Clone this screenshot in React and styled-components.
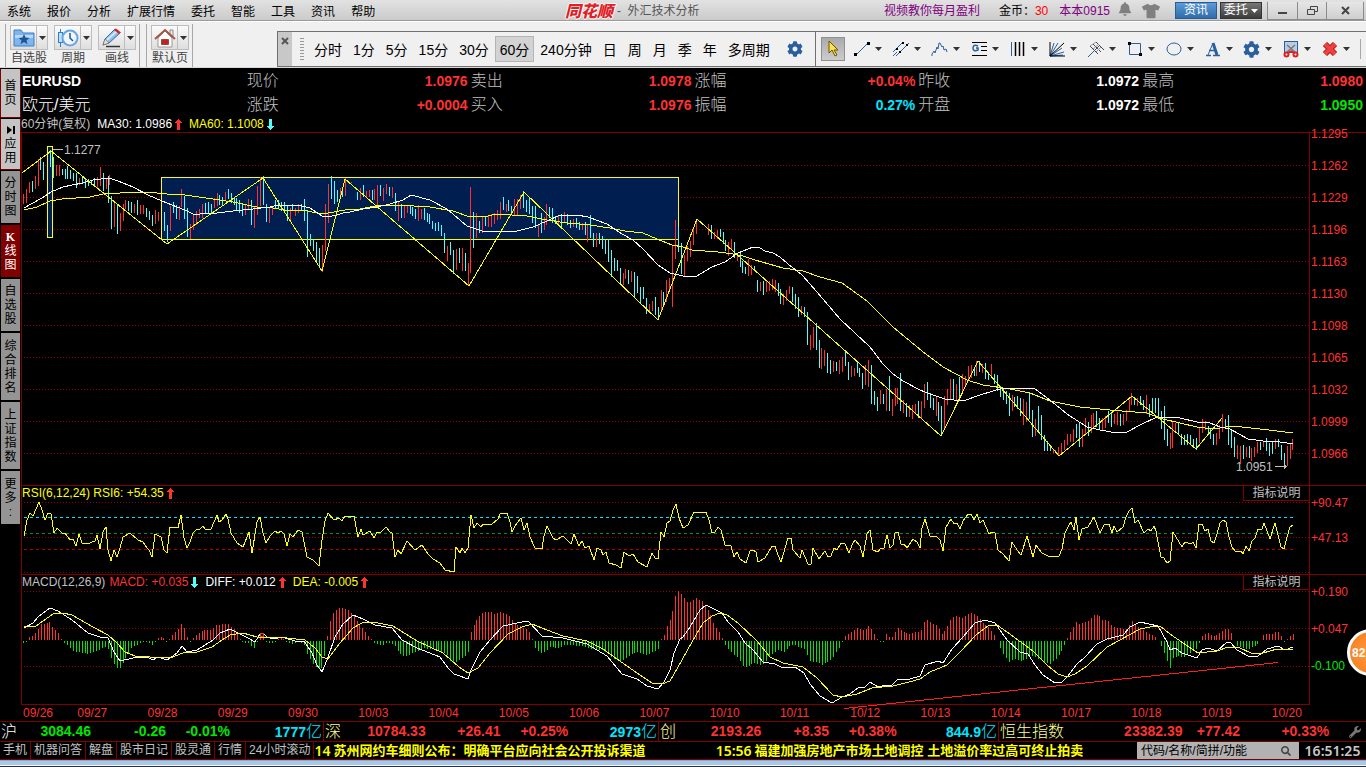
import React from 'react';
import styled, { createGlobalStyle, css } from 'styled-components';
import { FaWrench, FaSearch, FaTshirt, FaBell, FaCog } from 'react-icons/fa';

const GlobalStyle = createGlobalStyle`
  * { box-sizing: border-box; }
  body {
    margin: 0;
    background: #000;
    overflow: hidden;
    font-family: 'Liberation Sans', 'Noto Sans CJK SC', sans-serif;
    font-size: 12px;
  }
  button, input {
    font-family: inherit;
    font-size: inherit;
    margin: 0;
    padding: 0;
    border: 0;
    background: none;
    color: inherit;
  }
  button { white-space: nowrap; }
  a { color: inherit; text-decoration: none; }
`;

const colors = {
  line: '#800000',
  red: '#ff3232',
  green: '#00e600',
  cyan: '#00e6ff',
  candle: '#54fcfc',
  yellow: '#ffff00',
  gray: '#c0c0c0',
  white: '#ffffff',
  cream: '#ffff96',
};

/* ---------- page ---------- */

const Page = styled.div`
  display: flex;
  flex-direction: column;
  min-height: 100vh;
  overflow: hidden;
  position: relative;
`;

/* ---------- title bar ---------- */

const TitleBar = styled.header`
  display: grid;
  grid-template-columns: 565fr 319fr 482fr;
  height: 21px;
  background: linear-gradient(#e2e2e2, #cbcbcb);
  border-bottom: 1px solid #9a9a9a;
  align-items: center;
  line-height: 20px;
  color: #000;
  white-space: nowrap;
`;

const Menu = styled.nav`
  display: flex;
  gap: 16px;
  padding-left: 7px;
`;

const AppTitle = styled.div`
  display: flex;
  align-items: center;
  gap: 4px;
  padding-top: 1px;
  line-height: 19px;
  color: #555;
`;

const Logo = styled.span`
  font-size: 16px;
  font-weight: 900;
  font-style: italic;
  color: #e01f26;
  text-shadow: 1px 0 #fff, -1px 0 #fff, 0 1px #fff, 0 -1px #fff;
`;

const TitleRight = styled.div`
  display: flex;
  align-items: center;
  justify-content: flex-end;
  padding-right: 2px;
`;

const Purple = styled.a`
  padding-top: 1px;
  color: #800080;
`;

const Coins = styled.span`
  margin: 0 11px 0 19px;
  b {
    font-weight: 400;
    color: #f00;
  }
`;

const TitleIcons = styled.span`
  display: flex;
  gap: 10px;
  margin: 0 15px 0 8px;
  color: #808080;
`;

const TitleButtons = styled.div`
  display: flex;
  gap: 3px;
  margin-right: 5px;
`;

const TitleButton = styled.button`
  width: 42px;
  height: 17px;
  line-height: 15px;
  color: #fff;
  border: 1px solid ${({ $dark }) => ($dark ? '#333' : '#2a5d94')};
  background: ${({ $dark }) => ($dark ? 'linear-gradient(#777, #3c3c3c)' : 'linear-gradient(#5d9ad6, #2f6cab)')};
  svg { vertical-align: middle; }
`;

const WindowButtons = styled.div`
  display: flex;
  height: 18px;
  border: 1px solid #8c8c8c;
  border-top: 0;
  background: linear-gradient(#e6e6e6, #cfcfcf);
`;

const WindowButton = styled.button`
  width: ${({ $w }) => $w}px;
  display: flex;
  align-items: center;
  justify-content: center;
  & + & { border-left: 1px solid #8c8c8c; }
`;

/* ---------- tool bar ---------- */

const ToolBar = styled.div`
  display: flex;
  height: 47px;
  background: #f0f0f0;
  border-top: 1px solid #fff;
  border-bottom: 1px solid #d8d8d8;
`;

const ToolGroup = styled.div`
  display: flex;
  gap: 6px;
  margin-top: 2px;
  padding: 1px 3px 0 4px;
  border-left: 1px solid #a8a8a8;
  border-right: 1px solid #a8a8a8;
  margin-left: ${({ $left }) => $left}px;
`;

const BigTool = styled.div`
  display: flex;
  flex-direction: column;
  align-items: center;
  width: 38px;
  color: #444;
  line-height: 17px;
  white-space: nowrap;
`;

const SplitButton = styled.div`
  display: flex;
  width: 38px;
  height: 26px;
  border: 1px solid #bdbdbd;
  background: linear-gradient(#fbfbfb, #dedede);
  button {
    display: flex;
    align-items: center;
    justify-content: center;
  }
  button:first-child { flex: 1; }
  button:last-child {
    width: 11px;
    border-left: 1px solid #bdbdbd;
  }
`;

const FloatBar = styled.div`
  display: flex;
  flex: 1;
  margin: 9px 0 0 84px;
  height: 36px;
  border: 1px solid #707070;
  border-right: 0;
  background: #f0f0f0;
  align-items: center;
`;

const FloatClose = styled.button`
  width: 14px;
  align-self: stretch;
  background: #c8c8c8;
  color: #555;
  display: flex;
  justify-content: center;
  padding-top: 5px;
`;

const Grip = styled.span`
  width: 4px;
  height: 25px;
  margin: 0 5px 0 8px;
  background: radial-gradient(circle, #999 1px, transparent 1px) 0 0 / 2px 3px;
`;

const Frames = styled.div`
  display: flex;
  gap: 1px;
  flex: 1;
  align-items: center;
`;

const Frame = styled.button`
  height: 26px;
  padding: 0 5px;
  font-size: 14px;
  color: #000;
  ${({ $on }) => $on && css`
    background: #d3d3d3;
    box-shadow: inset 0 0 0 1px #b4b4b4;
  `}
`;

const GearButton = styled.button`
  margin-left: 11px;
  color: #2a5f9e;
  display: flex;
`;

const DrawTools = styled.div`
  display: flex;
  align-items: center;
  align-self: stretch;
  padding-left: 5px;
  border-left: 1px solid #707070;
`;

const PointerButton = styled.button`
  width: 24px;
  height: 24px;
  margin-right: 5px;
  background: linear-gradient(#aaa, #ccc);
  border: 1px solid #909090;
`;

const DrawTool = styled.button`
  width: 39px;
  height: 26px;
  display: flex;
  align-items: center;
  justify-content: space-between;
  padding: 0 7px 0 3px;
`;

const BarEnd = styled.span`
  width: 6px;
  height: 20px;
  margin-left: 3px;
  border-left: 1px solid #a8a8a8;
`;

/* ---------- body ---------- */

const Body = styled.div`
  display: flex;
  flex: 1;
`;

const SideBar = styled.nav`
  width: 21px;
  display: flex;
  flex-direction: column;
  gap: 2px;
  padding: 1px 1px 0;
`;

const SideTab = styled.button`
  display: flex;
  flex-direction: column;
  align-items: center;
  justify-content: center;
  line-height: 14px;
  height: ${({ $h }) => $h}px;
  color: ${({ $on }) => ($on ? '#fff' : '#000')};
  background: ${({ $on, $light }) => ($on ? '#800000' : $light ? '#c4c4c4' : '#949494')};
  ${({ $light }) => $light && css`box-shadow: 1px 0 #800000, -1px 0 #800000, 0 1px #800000;`}
  ${({ $on }) => $on && css`
    span:first-child {
      font-family: 'Liberation Serif', serif;
      font-weight: 700;
    }
  `}
`;

const Main = styled.main`
  flex: 1;
  min-width: 0;
  display: flex;
  flex-direction: column;
`;

const Quotes = styled.div`
  display: grid;
  grid-template-columns: 225fr repeat(5, 224fr);
  grid-auto-rows: 24px;
  padding: 1px 0 0 1px;
  line-height: 24px;
  height: 49px;
`;

const QuoteName = styled.div`
  color: #fff;
  font-size: ${({ $bold }) => ($bold ? 14 : 16)}px;
  font-weight: ${({ $bold }) => ($bold ? 700 : 300)};
`;

const Quote = styled.div`
  display: flex;
  justify-content: space-between;
  padding-right: 3px;
  font-size: 16px;
  font-weight: 300;
  color: ${colors.gray};
`;

const Num = styled.b`
  font-size: 14px;
  font-weight: 700;
  color: ${({ $c }) => colors[$c]};
`;

const Legend = styled.div`
  display: flex;
  align-items: center;
  height: 15px;
  line-height: 15px;
  white-space: nowrap;
`;

const LegendItem = styled.span`
  display: flex;
  align-items: center;
  gap: 3px;
  margin-right: ${({ $gap = 7 }) => $gap}px;
  color: ${({ $c }) => colors[$c]};
`;

const Panel = styled.section`
  display: flex;
  flex: ${({ $grow }) => $grow} 0 0;
  min-height: 0;
  border-top: 1px solid ${colors.line};
`;

const Plot = styled.div`
  flex: 1;
  min-width: 0;
  display: flex;
  flex-direction: column;
  border-left: 1px solid ${colors.line};
  border-right: 1px solid ${colors.line};
  border-bottom: ${({ $last }) => ($last ? 1 : 0)}px solid ${colors.line};
  svg.plot {
    display: block;
    flex: 1;
    width: 100%;
    min-height: 0;
    overflow: visible;
  }
`;

const PanelHead = styled.div`
  display: flex;
  justify-content: space-between;
`;

const HelpButton = styled.button`
  width: 66px;
  height: 15px;
  line-height: 14px;
  color: ${colors.gray};
  border-left: 1px solid ${colors.line};
  border-bottom: 1px solid ${colors.line};
`;

const Axis = styled.div`
  width: 56px;
  padding-left: 1px;
  display: flex;
  flex-direction: column;
  gap: ${({ $gap }) => $gap}px;
  margin-top: ${({ $top }) => $top}px;
  line-height: 16px;
  color: ${colors.red};
`;

const AxisLabel = styled.span`
  color: ${({ $c = 'red' }) => colors[$c]};
`;

const Dates = styled.div`
  display: grid;
  grid-template-columns: 54fr repeat(17, 70fr) 37fr;
  height: 16px;
  line-height: 16px;
  margin: 0 57px 0 2px;
  color: ${colors.red};
`;

/* ---------- bottom bars ---------- */

const IndexBar = styled.div`
  display: grid;
  grid-template-columns: 323fr 335fr 340fr 368fr;
  height: 20px;
  line-height: 19px;
  border-top: 1px solid ${colors.line};
`;

const IndexCell = styled.div`
  display: grid;
  grid-template-columns: ${({ $cols }) => $cols};
  padding: 0 1px;
  font-size: 16px;
  font-weight: 300;
  text-align: right;
  white-space: nowrap;
  & + & { border-left: 1px solid ${colors.line}; }
  svg { align-self: center; justify-self: end; margin-right: 4px; }
`;

const IndexName = styled.span`
  display: flex;
  justify-content: space-between;
  color: ${({ $c }) => colors[$c]};
`;

const Turnover = styled.span`
  color: ${colors.cyan};
`;

const NewsBar = styled.footer`
  display: flex;
  height: 19px;
  line-height: 17px;
  border-top: 1px solid ${colors.line};
  border-bottom: 1px solid ${colors.line};
  color: ${colors.gray};
  white-space: nowrap;
`;

const NewsLink = styled.a`
  padding: 0 3px;
  border-right: 1px solid ${colors.line};
`;

const News = styled.a`
  flex: ${({ $grow }) => $grow} 0 0;
  display: flex;
  gap: 3px;
  font-size: 13px;
  font-weight: 700;
  color: ${colors.yellow};
  overflow: hidden;
`;

const Time = styled.time`
  font-family: 'Noto Sans', sans-serif;
  font-size: 14px;
  font-weight: 600;
`;

const Search = styled.label`
  width: 162px;
  display: flex;
  align-items: center;
  justify-content: space-between;
  padding: 0 8px 0 4px;
  background: #b2b2b2;
  color: #444;
  input { width: 130px; outline: 0; }
  input::placeholder { color: #000; opacity: 1; }
`;

const Clock = styled(Time)`
  width: 67px;
  text-align: center;
  color: #c8c8c8;
`;

const TaskEdge = styled.div`
  height: 7px;
  background: #a9c8e8;
  border-top: 1px solid #8fa9c8;
  border-bottom: 1px solid #26303c;
  box-shadow: inset 0 -1px #f4f8fc;
`;

const Badge = styled.button`
  position: absolute;
  right: -28px;
  top: 629px;
  width: 47px;
  height: 47px;
  padding-left: 2px;
  border: 3px solid #fff;
  border-radius: 50%;
  background: radial-gradient(#ff9a3d, #f47a1c);
  color: #fff;
  font-size: 12px;
  font-weight: 700;
  text-align: left;
`;

/* ---------- chart data ---------- */

// Each row: x of its first bar, then colour + high-low for every bar.
const BAR_STEP = 2.94;
const CANDLES = [
  [23, 'r194-204 r189-203 r182-193 c181-192 r176-189 r159-186 c157-170 c162-180'],
  [50, 'c150-167 c157-178 r165-176 r165-176 c169-175 c169-179 c166-179 c170-179 c173-181 c173-188 r178-185 c177-184 c179-188 c179-186 c180-185 c178-186 r177-188 r167-186 c173-191 r179-189 r175-185'],
  [108, 'c176-203 c196-229 r203-227 c204-234 r213-231 r204-221 r200-209 c201-211 c202-213 r204-213 c200-215 r205-214 r205-214 c208-217 c211-220 c215-226 r210-224 r212-221'],
  [164, 'c212-231 c225-242 r206-231 c202-213 c205-219 r206-220 r189-207 c196-219 c208-237 r224-239 r215-230 r211-225 r209-218 r204-218 c203-214 c202-213 c204-213 r198-208 r193-206'],
  [219, 'c195-205 c197-205 r192-201 c189-199 c193-203 c198-205 c198-210 c200-213 c204-216 r204-215 r199-210 c200-225 r207-228 r186-215 r177-206 c176-205 c204-222 r208-223 r206-215'],
  [275, 'c200-209 c200-209 c202-211 c202-213 c206-221 r208-220 c204-211 r208-216 r204-213 c204-210 c199-221 c210-257 c234-246 c239-251 c242-262 c248-267 r245-272'],
  [325, 'r204-251 r184-223 c176-199 c181-204 c190-202 r188-198 c187-197 r178-196 r182-183 r182-183'],
  [357, 'c192-200 r188-200 c185-197 r191-198 r190-197 c190-200 r189-200 r185-205 c185-196 r188-201 r184-194 c187-196 r187-198 c193-211 r201-221 c204-218 r206-218 r205-213 c205-214'],
  [412, 'c207-216 c209-219 r205-221 r209-219 c208-220 c213-222 c214-224 c221-229 c223-231 c222-231 c225-236 c233-253 r246-261 c242-255'],
  [453, 'c250-274 r249-270 c248-263 r248-271 c253-271 r263-286 r187-273 c212-248 r213-238 c221-233 r217-233 c216-226 r216-227'],
  [491, 'r214-227 r213-224 r210-220 r202-219 c197-210 r204-212 c200-211 c206-215 r199-215 r199-215 r195-209 c191-208 c200-212'],
  [529, 'c197-214 c206-223 c206-228 r225-237 c213-233 r217-230 r204-225 c207-218 c208-223 c216-224 r215-225 c214-228 r212-223 c214-225'],
  [570, 'c220-228 r219-227 c218-228 c222-230 r223-230 c222-235 r224-242 c215-238 c233-247 r233-247 c233-244 c236-249 c239-254'],
  [608, 'c239-262 c250-277 c258-271 c260-271 c268-284 r273-285 r269-279 c270-284 r271-282 c272-298 c276-293 c287-304 c287-299'],
  [646, 'c298-314 r304-312 r301-311 c297-315 c307-320 r290-310 c292-306 r280-302 r278-290 r246-307 r220-259 c227-252 c243-274 r255-276'],
  [687, 'r246-261 r241-257 r227-245 r220-234'],
  [708, 'r224-235 c225-239 r232-239 r230-239 c229-237 c232-244'],
  [725, 'c240-251 r242-256 r239-250 c242-258 r253-261 c253-267 c261-273 c267-274 r259-276 r265-275 c266-271 c280-292 r282-291'],
  [763, 'c281-295 r280-292 r281-291 r279-290 r280-292 c283-296 c289-304 r294-305 r290-301 r286-294 c287-302 c294-309 c297-317 r306-315'],
  [804, 'c307-317 c312-345 r335-350 r327-348 c323-350 c340-368 r348-369 r350-366 c353-373 c360-374 r361-372 c362-371 r360-374'],
  [842, 'r357-372 c351-366 c362-380 r366-377 r368-376 c362-373 c368-377 c373-389 r365-385 r360-387 c365-404 c391-405 c397-411'],
  [880, 'r390-404 c394-404 r389-411 c376-411 r399-416 r388-406 r388-404 c373-411 r400-413 c403-417 r405-417 r405-419 r404-414 c401-418'],
  [921, 'r401-418 r384-408 c382-400 c393-408 c398-410 r396-416 c402-421 c406-436 r396-428 r389-405 r379-400 c379-400 r384-400'],
  [959, 'c377-401 r374-394 r376-386 r366-380 r365-378 c367-376 r361-376 c361-372 r364-373 c363-379 c372-380 r364-376 c374-384'],
  [997, 'c375-391 c386-397 c389-400 c391-404 c393-416 r395-411 c397-407 c396-409 c398-416 r399-425 r402-422 c392-419 c410-437 r419-436'],
  [1038, 'c406-431 c415-440 c435-451 c441-451 c446-451 r449-453 r450-452 r447-455 r443-453 r440-450 r434-445 r434-442 r429-442'],
  [1076, 'c424-438 c423-447 r429-447 r418-435 c422-436 r415-433 r413-427 c411-427 c418-430 r418-430 r416-428 c411-423 c413-427'],
  [1114, 'r414-424 r412-425 c414-426 r414-425 r410-421 r400-412 r393-405 c397-405 r398-406 c396-405 c400-410 r395-414 c404-417 c398-413'],
  [1155, 'c398-413 c398-417 c411-429 c406-440 c429-446 r433-449 r422-448 r423-432 c422-435 c434-445 c435-445 c434-445 c435-445'],
  [1193, 'c439-448 c438-450 r427-443 r419-433 r421-430 c426-433 c428-439 c434-445 r433-445 r425-439 r414-432 c419-428 c415-445 c429-448'],
  [1234, 'c437-457 r445-459 r446-464 c445-459 r447-457 c446-458 r448-461 r447-457 r442-453 c442-450 r441-447 c438-451 c443-456 c441-454'],
  [1275, 'r439-449 c439-447 c445-460 c453-466 r446-466 r443-459 r439-450'],
];

const MA30 = '24,208 33,203 42,198 51,192 63,187 72,185 83,183 93,180 109,178 118,181 133,187 148,195 162,201 177,207 185,210 193,214 200,214 217,213 233,211 253,209 270,207 278,205 302,206 310,208 322,216 328,217 337,215 343,213 350,212 363,209 377,207 390,204 403,200 411,195 430,200 447,209 467,226 482,231 500,232 517,231 533,227 547,221 558,216 577,215 588,217 607,224 622,234 633,240 643,249 658,265 670,273 683,276 695,277 712,267 725,262 738,253 753,247 760,248 765,251 773,253 780,257 788,264 802,275 817,292 840,319 870,347 883,364 893,374 903,381 920,390 933,395 945,399 963,401 980,395 993,391 1003,388 1035,389 1050,400 1067,414 1087,427 1100,430 1117,433 1127,432 1140,425 1157,417 1180,418 1197,422 1210,423 1220,427 1230,429 1248,439 1263,441 1280,442 1293,444';
const MA60 = '24,210 37,207 50,201 62,199 90,197 103,194 137,192 157,193 167,194 185,195 213,199 233,202 257,207 273,208 290,211 303,210 317,213 328,213 345,210 360,209 370,207 383,205 398,205 430,207 453,211 467,216 483,217 497,214 527,216 547,220 567,223 590,225 610,228 625,231 643,233 657,239 672,245 683,247 692,250 718,252 733,254 743,256 755,260 783,268 803,271 820,277 842,283 867,301 878,312 893,327 922,351 943,367 967,380 983,385 1010,389 1030,393 1050,401 1080,407 1110,410 1147,413 1163,419 1180,423 1197,427 1213,429 1233,426 1260,429 1277,431 1293,433';
const ZIGZAG = '22,173 51,151 167,244 263,178 322,271 345,179 469,286 524,192 658,320 697,219 941,436 978,361 1059,456 1132,396 1196,449 1222,418';

const RSI = '24,536 27,520 30,513 33,516 39,502 42,510 45,520 48,513 51,514 54,533 57,528 62,533 65,533 70,540 73,539 76,546 79,534 82,543 88,544 92,542 95,541 97,535 100,549 103,532 106,527 108,550 111,561 114,550 117,557 120,548 123,537 130,533 138,540 143,542 147,548 149,550 152,557 155,534 161,537 164,550 167,553 170,527 178,528 181,515 184,538 187,548 190,542 193,533 197,529 200,529 203,526 205,529 211,529 214,522 217,515 219,522 222,520 226,514 228,519 231,533 237,543 243,547 249,532 252,553 257,522 260,517 263,533 266,543 270,536 275,531 278,533 281,531 284,534 287,546 290,534 293,537 298,530 302,532 304,542 307,557 313,560 319,566 322,540 325,521 328,513 334,520 339,518 342,521 345,516 354,516 358,537 361,529 363,535 370,531 374,538 377,532 380,533 386,527 390,532 392,533 395,557 398,550 401,554 407,541 415,550 422,545 428,554 433,559 440,563 445,570 454,572 456,547 460,553 462,548 465,553 468,548 471,515 474,528 477,523 481,527 483,524 491,525 498,519 500,514 507,513 510,522 512,532 515,526 521,518 524,530 527,523 530,537 535,548 542,549 544,536 547,526 553,538 556,540 563,536 571,544 574,534 579,546 582,541 585,548 589,546 594,560 597,548 601,550 603,555 606,552 609,563 616,565 621,568 624,552 629,556 633,554 638,562 647,567 652,553 655,558 658,559 661,532 664,537 667,523 670,521 673,510 676,504 679,518 683,528 688,525 694,512 706,512 709,520 712,533 715,532 718,527 721,530 725,545 731,546 734,557 737,552 740,559 746,563 750,551 753,550 756,552 758,562 765,558 772,546 775,546 778,555 781,562 788,538 791,538 793,550 800,558 802,550 808,564 811,564 813,548 819,559 825,551 828,557 831,556 834,548 837,550 841,543 845,544 849,553 852,545 855,540 860,546 863,557 867,534 870,530 873,550 878,552 881,548 884,548 887,535 890,548 893,545 895,533 898,532 901,544 904,544 907,548 913,539 917,542 920,548 922,528 925,519 930,536 937,537 940,540 943,551 946,527 951,519 954,524 957,523 960,529 963,521 968,514 971,514 974,520 977,514 980,523 983,520 989,534 992,532 995,533 998,550 1003,554 1009,561 1012,542 1015,547 1021,555 1027,536 1033,557 1036,545 1042,553 1050,557 1059,556 1062,549 1065,533 1068,527 1071,522 1074,530 1076,517 1079,540 1082,529 1088,527 1094,517 1100,533 1104,525 1109,524 1112,533 1114,526 1117,532 1123,527 1126,517 1129,511 1132,508 1135,523 1138,520 1144,533 1148,529 1151,531 1154,526 1156,531 1158,542 1161,557 1164,558 1167,563 1170,561 1173,532 1176,537 1182,547 1185,542 1191,544 1193,542 1196,548 1199,524 1202,524 1205,531 1208,529 1211,541 1214,543 1217,534 1220,523 1223,520 1226,522 1229,537 1232,547 1235,551 1241,551 1243,554 1246,546 1249,551 1252,541 1255,538 1258,529 1262,529 1264,523 1270,539 1275,523 1281,547 1284,549 1287,537 1290,527 1293,525';

const DIFF = '24,628 33,623 38,617 50,608 58,611 72,620 88,633 100,637 108,638 114,652 120,661 133,658 147,657 153,660 158,657 167,660 177,653 182,646 187,652 197,650 213,640 220,633 230,629 238,633 248,638 255,642 260,634 263,633 267,637 273,639 282,637 295,641 304,641 312,653 317,665 322,672 327,660 335,637 343,624 353,615 363,619 375,625 392,628 402,640 417,648 440,657 448,668 454,674 468,679 471,670 480,652 490,640 503,626 517,623 528,621 542,636 563,638 587,644 607,656 622,674 637,679 647,686 658,689 664,682 670,670 674,653 680,639 683,637 690,627 700,610 706,605 722,613 728,622 738,632 745,643 753,650 763,662 775,664 783,668 795,667 804,673 810,684 820,696 832,703 842,697 850,694 858,688 865,687 870,682 878,687 887,685 892,685 898,679 910,679 920,676 925,665 938,661 943,663 952,649 963,637 975,623 985,620 995,623 1007,640 1020,652 1028,654 1035,665 1043,675 1055,683 1062,682 1068,676 1077,664 1085,657 1097,644 1107,639 1123,635 1130,627 1140,622 1158,626 1167,642 1170,650 1175,648 1182,653 1197,658 1202,650 1208,648 1217,651 1227,642 1230,642 1237,650 1250,657 1258,656 1267,649 1278,646 1285,650 1293,647';
const DEA = '24,627 36,626 53,614 63,613 72,615 93,627 108,635 117,643 125,652 135,656 150,657 170,658 183,653 197,652 212,647 222,640 230,635 243,633 257,637 278,637 305,640 315,648 322,657 328,659 340,643 353,628 362,623 373,622 393,626 417,641 443,653 459,667 468,673 478,668 490,653 508,634 522,627 532,624 547,630 563,636 587,641 603,649 617,659 637,673 652,683 662,684 670,681 678,667 692,642 703,623 712,616 720,613 727,615 738,623 757,641 770,657 783,663 803,667 817,678 833,695 842,697 857,694 872,688 893,686 909,682 920,679 930,672 947,665 960,652 977,634 988,626 997,625 1007,632 1033,651 1047,665 1058,674 1067,677 1075,674 1087,666 1107,647 1120,640 1140,629 1150,627 1160,626 1170,634 1183,643 1198,653 1217,651 1228,647 1238,647 1253,654 1263,653 1277,649 1293,649';

// Outline of the histogram as x,height; bars are read off it.
const HISTOGRAM = '23,-2 26,-1 29,3 33,4 36,8 40,14 42,18 44,16 50,18 53,11 57,9 60,3 62,-1 65,-2 70,-7 73,-10 82,-12 88,-13 98,-9 107,-5 109,-12 112,-20 118,-28 121,-27 124,-19 131,-7 137,-4 143,-1 148,-1 152,-4 155,-1 158,2 161,3 164,1 167,-2 170,3 178,11 181,16 184,12 187,3 190,-1 193,2 199,7 204,10 211,10 216,15 228,16 231,13 237,8 240,1 243,-2 249,-2 252,-7 255,-7 258,2 261,7 264,4 266,-1 270,-3 275,-1 281,2 285,-1 293,-3 299,-1 304,-4 307,-13 314,-25 319,-28 322,-26 325,-10 328,11 331,23 334,29 340,32 348,30 355,24 358,17 364,9 370,2 372,-1 376,-3 382,-4 387,-2 394,-3 397,-9 401,-15 405,-15 416,-11 422,-7 437,-9 447,-14 451,-22 458,-20 465,-15 468,-11 471,8 474,15 477,22 483,28 490,28 495,26 501,28 507,26 515,16 521,13 528,10 530,5 532,1 535,-7 542,-13 550,-6 558,-7 565,-4 583,-5 590,-8 603,-9 613,-18 622,-20 635,-11 647,-14 658,-8 661,1 664,5 667,14 670,20 673,33 676,49 679,49 682,45 688,37 696,42 703,38 706,34 709,28 712,19 718,9 721,5 723,-1 726,-6 732,-12 737,-16 743,-25 747,-27 753,-21 758,-24 763,-23 773,-12 778,-9 785,-11 790,-4 795,-4 800,-7 805,-8 808,-17 811,-22 814,-20 823,-24 832,-17 837,-10 840,-5 843,1 846,5 857,12 863,10 867,11 869,16 872,9 875,5 878,-1 883,-1 886,6 889,3 892,3 898,12 902,9 909,6 917,9 919,7 922,11 924,18 927,20 937,14 942,6 948,16 951,22 957,24 962,22 969,27 972,27 977,24 983,17 989,12 993,6 996,3 998,-3 1004,-15 1009,-21 1015,-18 1022,-20 1032,-15 1042,-20 1050,-23 1058,-16 1065,-2 1068,4 1071,10 1077,19 1079,16 1088,19 1094,25 1098,25 1102,20 1107,20 1112,14 1125,10 1132,19 1135,15 1143,10 1148,6 1156,3 1159,-1 1162,-7 1167,-20 1170,-27 1173,-17 1178,-15 1182,-17 1192,-11 1197,-7 1199,-2 1202,4 1208,7 1213,3 1218,6 1227,12 1230,9 1233,2 1235,-3 1238,-6 1248,-8 1255,-5 1259,-1 1262,3 1264,6 1273,6 1276,9 1279,7 1282,2 1284,-1 1287,1 1290,4 1294,7'
  .split(' ')
  .map((p) => p.split(',').map(Number));

const heightAt = (x) => {
  const i = Math.max(1, HISTOGRAM.findIndex(([px]) => px >= x));
  const [x0, h0] = HISTOGRAM[i - 1];
  const [x1, h1] = HISTOGRAM[i];
  return Math.round(h0 + ((h1 - h0) * (x - x0)) / (x1 - x0));
};

const candlePath = (kind) =>
  CANDLES.map(([start, bars]) =>
    bars
      .split(' ')
      .map((bar, i) => {
        if (bar[0] !== kind) return '';
        const [hi, lo] = bar.slice(1).split('-');
        return `M${Math.floor(start + i * BAR_STEP + 0.3) + 0.5} ${hi}V${lo}`;
      })
      .join('')
  ).join('');

const histogramPath = (up) => {
  let d = '';
  for (let i = 0; i < 435; i++) {
    const x = Math.floor(23.6 + i * 2.925);
    const h = heightAt(x);
    if (up && h > 0) d += `M${x + 0.5} 640v${-h}`;
    if (!up && h < 0) d += `M${x + 0.5} 641v${-h}`;
  }
  return d;
};

/* ---------- drawings ---------- */

const Caret = ({ color = '#333' }) => (
  <svg width="7" height="4" viewBox="0 0 7 4"><path d="M0 0h7L3.5 4z" fill={color} /></svg>
);

const Arrow = ({ up }) => (
  <svg width="7" height="11" viewBox="0 0 7 11" shapeRendering="crispEdges">
    <path
      d={up ? 'M3 0h1v1h1v1h1v1h1v1H5v7H2V4H0V3h1V2h1V1h1z' : 'M3 11h1v-1h1V9h1V8h1V7H5V0H2v7H0v1h1v1h1v1h1z'}
      fill={up ? colors.red : colors.candle}
    />
  </svg>
);

const Icon = ({ size = 18, children }) => (
  <svg width={size} height={size} viewBox="0 0 18 18" fill="none" stroke="#2a5f9e">{children}</svg>
);

const FolderIcon = () => (
  <svg width="22" height="20" viewBox="0 0 22 20">
    <path d="M1 2h7l2 3h11v13H1z" fill="#7fb5ee" stroke="#3f7fc4" />
    <path d="M2 7h18v3H2z" fill="#b7d8f8" />
    <path d="M11 6l1.5 3.6 4 .3-3 2.5 1 3.8-3.5-2.1-3.5 2.1 1-3.8-3-2.5 4-.3z" fill="#1f5590" />
  </svg>
);

const ClockIcon = () => (
  <svg width="22" height="20" viewBox="0 0 22 20">
    <path d="M3.5 1v18" stroke="#2f7fd0" />
    <rect x="1.5" y="4.5" width="4" height="10" fill="#bfe0ff" stroke="#2f7fd0" />
    <circle cx="13" cy="10" r="7.5" fill="#eef7ff" stroke="#6aa5df" strokeWidth="2" />
    <path d="M13 5v5l3 3" stroke="#24588f" strokeWidth="1.5" fill="none" />
  </svg>
);

const PencilIcon = () => (
  <svg width="22" height="20" viewBox="0 0 22 20">
    <path d="M5 18.500h14" stroke="#333" strokeWidth="1.5" />
    <path d="M2 17l2-6L14 1l5 4L8 15z" fill="#8abcf0" stroke="#376ca5" />
    <path d="M6 12L16 3" stroke="#d4e8fb" strokeWidth="2" />
    <path d="M13 2l2-1.500 5 4L18 6z" fill="#d2232a" />
    <path d="M2 17l2-6 4 4z" fill="#f4e0c0" stroke="#555" strokeWidth=".5" />
  </svg>
);

const HouseIcon = () => (
  <svg width="22" height="20" viewBox="0 0 22 20">
    <path d="M16 2h3v6h-3z" fill="#eee" stroke="#888" />
    <path d="M4 10v9h14v-9l-7-7z" fill="#fff" stroke="#999" />
    <path d="M1 11L11 2l10 9" fill="none" stroke="#a3573f" strokeWidth="2" />
    <path d="M7.5 11.5h7v5h-7z" fill="#c91e1e" stroke="#8c4a4a" />
  </svg>
);

const CutIcon = () => (
  <Icon>
    <rect x="2.5" y="1.5" width="13" height="11" fill="#b8cde4" />
    <path d="M5 5l8 7M13 5l-8 7" stroke="#777" strokeWidth="1.5" />
    <path d="M9 11l-3 2M9 11l3 2" stroke="#d22" strokeWidth="2" />
    <circle cx="4.5" cy="14.5" r="2" stroke="#d22" strokeWidth="2" />
    <circle cx="13.5" cy="14.5" r="2" stroke="#d22" strokeWidth="2" />
  </Icon>
);

const drawTools = [
  ['线段', <Icon key="i"><path d="M3 15L15 3" /><path d="M1 13h3v3H1zM14 2h3v3h-3z" fill="#000" stroke="none" /></Icon>],
  ['平行线', <Icon key="i"><path d="M1 12L11 2M4 16L17 3M1 16l4-4" /><path d="M4 8h2v2H4zM10 2h2v2h-2zM7 11h2v2H7zM14 4h2v2h-2z" fill="#000" stroke="none" /></Icon>],
  ['波浪线', <Icon key="i"><path d="M1 16v-2l2-3 1 2 2-6 1 2 1-6h1l2 4 1-1 1 4 2-1 1 3" /></Icon>],
  ['黄金分割', <Icon key="i"><path d="M2 2.5h15M11 6.5h6M11 10.5h6M2 15.5h15" stroke="#000" /><path d="M8 6q-5-2-5 2t5 2V8H6" strokeWidth="1.5" /></Icon>],
  ['周期线', <Icon key="i"><path d="M2.5 2v14" /><path d="M6.500 2v14M10.500 2v14M14.500 2v14" stroke="#000" strokeWidth="1.5" /></Icon>],
  ['江恩角度', <Icon key="i"><path d="M2 16L6 3M2 16L10 3M2 16l12-8M2 16l14-4M2 16l13-1" /><path d="M2 2v14h15M2 16L16 3" stroke="#000" /></Icon>],
  ['通道', <Icon key="i"><path d="M1 17L12 6" stroke="#2a5f9e" /><path d="M3 6l8 8M6 4l8 8M9 2l8 8" stroke="#444" /><path d="M3 6l6-4M6 9l6-5M9 12l5-5" stroke="#999" /></Icon>],
  ['矩形', <Icon key="i"><path d="M3.5 3.5h11v11h-11z" /><path d="M2 2h3v3H2zM13 13h3v3h-3z" fill="#000" stroke="none" /></Icon>],
  ['椭圆', <Icon key="i"><ellipse cx="9" cy="9" rx="7" ry="6" /></Icon>],
  ['文字', <Icon key="i"><path d="M4 15L9 3" /><path d="M9 3l4 12" strokeWidth="3" /><path d="M5 10.5h6M2 15.5h5M9 15.5h7" strokeWidth="1.5" /></Icon>],
  ['设置', <FaCog key="i" size={17} color="#2a5f9e" />],
  ['截图', <CutIcon key="i" />],
  ['删除', <Icon key="i"><path d="M4 4l10 10M14 4L4 14" stroke="#a81414" strokeWidth="6" /><path d="M4 4l10 10M14 4L4 14" stroke="#f04040" strokeWidth="4" /></Icon>],
];

/* ---------- content ---------- */

const menus = ['系统', '报价', '分析', '扩展行情', '委托', '智能', '工具', '资讯', '帮助'];
const frames = ['分时', '1分', '5分', '15分', '30分', '60分', '240分钟', '日', '周', '月', '季', '年', '多周期'];

const quotes = [
  ['现价', '1.0976', 'red'], ['卖出', '1.0978', 'red'], ['涨幅', '+0.04%', 'red'], ['昨收', '1.0972', 'white'], ['最高', '1.0980', 'red'],
  ['涨跌', '+0.0004', 'red'], ['买入', '1.0976', 'red'], ['振幅', '0.27%', 'cyan'], ['开盘', '1.0972', 'white'], ['最低', '1.0950', 'green'],
];

const tabs = [
  { text: '首页', h: 48, light: true },
  { text: '应用', h: 50, light: true, icon: true },
  { text: '分时图', h: 52 },
  { text: 'K线图', h: 52, on: true },
  { text: '自选股', h: 52 },
  { text: '综合排名', h: 67 },
  { text: '上证指数', h: 67 },
  { text: '更多:', h: 53 },
];

const prices = ['1.1295', '1.1262', '1.1229', '1.1196', '1.1163', '1.1130', '1.1098', '1.1065', '1.1032', '1.0999', '1.0966'];
const dates = ['09/26', '09/27', '09/28', '09/29', '09/30', '10/03', '10/04', '10/05', '10/06', '10/07', '10/10', '10/11', '10/12', '10/13', '10/14', '10/17', '10/18', '10/19', '10/20'];

const indexes = [
  { name: '沪', nameColor: 'white', c: 'green', values: ['3084.46', '-0.26', '-0.01%'], money: '1777', cols: '90fr 75fr 64fr 92fr' },
  { name: '深', nameColor: 'cream', c: 'red', values: ['10784.33', '+26.41', '+0.25%'], money: '2973', cols: '101fr 75fr 68fr 89fr' },
  { name: '创', nameColor: 'cream', c: 'red', values: ['2193.26', '+8.35', '+0.38%'], money: '844.9', cols: '102fr 68fr 68fr 101fr' },
  { name: '恒生指数', nameColor: 'cream', c: 'red', values: ['23382.39', '+77.42', '+0.33%'], cols: '184fr 58fr 90fr 36fr' },
];

const links = ['手机', '机器问答', '解盘', '股市日记', '股灵通', '行情', '24小时滚动'];

const BigToolItem = ({ label, icon }) => (
  <BigTool>
    <SplitButton>
      <button aria-label={label}>{icon}</button>
      <button aria-label={`${label}菜单`}><Caret /></button>
    </SplitButton>
    {label}
  </BigTool>
);

const gridPath = (ys) => ys.map((y) => `M24 ${y}.5H1309`).join('');

const PriceChart = () => (
  <svg className="plot" viewBox="22 133 1287 352" preserveAspectRatio="none" fill="none" shapeRendering="crispEdges">
    <path d={gridPath([165, 197, 229, 261, 293, 325, 357, 389, 421, 453])} stroke="#960000" strokeDasharray="1 2" />
    <rect x="161.5" y="177.5" width="517" height="62" fill="#001e50" stroke={colors.yellow} />
    <rect x="47.5" y="146.5" width="5" height="91" fill="#001e50" stroke={colors.yellow} />
    <path d={candlePath('r')} stroke={colors.red} />
    <path d={candlePath('c')} stroke={colors.candle} />
    <polyline points={MA60} stroke={colors.yellow} />
    <polyline points={MA30} stroke={colors.white} />
    <polyline points={ZIGZAG} stroke={colors.yellow} />
    <path d="M53 149.5h10M1275 466.5h12M1284.5 464v5M1285.5 465v3" stroke={colors.gray} />
    <text x="64" y="154" fill={colors.gray} fontSize="12">1.1277</text>
    <text x="1236" y="471" fill={colors.gray} fontSize="12">1.0951</text>
  </svg>
);

const RsiChart = () => (
  <svg className="plot" viewBox="22 501 1287 73" preserveAspectRatio="none" fill="none" shapeRendering="crispEdges">
    <path d={gridPath([502, 537, 572])} stroke="#960000" strokeDasharray="1 2" />
    <path d="M24 517.5H1293" stroke={colors.cyan} strokeDasharray="3 3" />
    <path d="M24 533.5H1293" stroke="#008c46" strokeDasharray="3 3" />
    <path d="M24 549.5H1293" stroke="#b40000" strokeDasharray="3 3" />
    <polyline points={RSI} stroke={colors.yellow} />
  </svg>
);

const MacdChart = () => (
  <svg className="plot" viewBox="22 590 1287 114" preserveAspectRatio="none" fill="none" shapeRendering="crispEdges">
    <path d={gridPath([591, 628, 666])} stroke="#960000" strokeDasharray="1 2" />
    <path d={histogramPath(true)} stroke={colors.red} />
    <path d={histogramPath(false)} stroke={colors.green} />
    <polyline points={DIFF} stroke={colors.white} />
    <polyline points={DEA} stroke={colors.yellow} />
    <circle cx="262" cy="635" r="2" stroke={colors.red} />
    <path d="M844 708.5L1278 662.5" stroke="#ff1e1e" />
  </svg>
);

const App = () => (
  <Page>
    <GlobalStyle />
    <TitleBar>
      <Menu>{menus.map((m) => <button key={m}>{m}</button>)}</Menu>
      <AppTitle><Logo>同花顺</Logo><span>-&nbsp; 外汇技术分析</span></AppTitle>
      <TitleRight>
        <Purple href="#video">视频教你每月盈利</Purple>
        <Coins>金币：<b>30</b></Coins>
        <Purple href="#user">本本0915</Purple>
        <TitleIcons><FaBell size={14} /><FaTshirt size={18} /></TitleIcons>
        <TitleButtons>
          <TitleButton>资讯</TitleButton>
          <TitleButton $dark>委托 <Caret color="#fff" /></TitleButton>
        </TitleButtons>
        <WindowButtons>
          <WindowButton $w={29} aria-label="最小化"><svg width="9" height="9"><path d="M0 7h9" stroke="#444" strokeWidth="2" /></svg></WindowButton>
          <WindowButton $w={29} aria-label="还原"><svg width="11" height="9" fill="none" stroke="#444"><path d="M3.5 3V.5h7v5H8M.5 3.5h7v5h-7z" /></svg></WindowButton>
          <WindowButton $w={37} aria-label="关闭"><svg width="9" height="9"><path d="M1 1l7 7M8 1L1 8" stroke="#444" strokeWidth="2" /></svg></WindowButton>
        </WindowButtons>
      </TitleRight>
    </TitleBar>

    <ToolBar>
      <ToolGroup $left={5}>
        <BigToolItem label="自选股" icon={<FolderIcon />} />
        <BigToolItem label="周期" icon={<ClockIcon />} />
        <BigToolItem label="画线" icon={<PencilIcon />} />
      </ToolGroup>
      <ToolGroup $left={6}>
        <BigToolItem label="默认页" icon={<HouseIcon />} />
      </ToolGroup>
      <FloatBar>
        <FloatClose aria-label="关闭工具条"><svg width="8" height="8"><path d="M1 1l6 6M7 1L1 7" stroke="#555" strokeWidth="2" /></svg></FloatClose>
        <Grip />
        <Frames>
          {frames.map((f) => <Frame key={f} $on={f === '60分'}>{f}</Frame>)}
          <GearButton aria-label="周期设置"><FaCog size={16} /></GearButton>
        </Frames>
        <DrawTools>
          <PointerButton aria-label="选择">
            <svg width="18" height="18" viewBox="0 0 18 18"><path d="M5 2v12l3-3 3 6 2-1-3-5h4z" fill="#ffe14a" stroke="#6b5200" /></svg>
          </PointerButton>
          {drawTools.map(([name, icon]) => (
            <DrawTool key={name} aria-label={name}>{icon}<Caret /></DrawTool>
          ))}
          <BarEnd />
        </DrawTools>
      </FloatBar>
    </ToolBar>

    <Body>
      <SideBar>
        {tabs.map((t) => (
          <SideTab key={t.text} $h={t.h} $on={t.on} $light={t.light}>
            {t.icon && <svg width="8" height="14" viewBox="0 0 8 14"><path d="M0 3l5 4-5 4zM6 3h2v8H6z" /></svg>}
            {[...t.text].map((ch, i) => <span key={i}>{ch}</span>)}
          </SideTab>
        ))}
      </SideBar>
      <Main>
        <Quotes>
          <QuoteName $bold>EURUSD</QuoteName>
          {quotes.slice(0, 5).map(([k, v, c]) => <Quote key={k}>{k}<Num $c={c}>{v}</Num></Quote>)}
          <QuoteName>欧元/美元</QuoteName>
          {quotes.slice(5).map(([k, v, c]) => <Quote key={k}>{k}<Num $c={c}>{v}</Num></Quote>)}
        </Quotes>
        <Legend>
          <LegendItem $c="gray">60分钟(复权)</LegendItem>
          <LegendItem $c="white">MA30: 1.0986<Arrow up /></LegendItem>
          <LegendItem $c="yellow">MA60: 1.1008<Arrow /></LegendItem>
        </Legend>

        {/* every panel also has its own 1px top border */}
        <Panel $grow={352}>
          <Plot><PriceChart /></Plot>
          <Axis $top={-7} $gap={16}>{prices.map((p) => <AxisLabel key={p}>{p}</AxisLabel>)}</Axis>
        </Panel>
        <Panel $grow={88}>
          <Plot>
            <PanelHead>
              <Legend><LegendItem $c="yellow">RSI(6,12,24) RSI6: +54.35<Arrow up /></LegendItem></Legend>
              <HelpButton>指标说明</HelpButton>
            </PanelHead>
            <RsiChart />
          </Plot>
          <Axis $top={9} $gap={19}><AxisLabel>+90.47</AxisLabel><AxisLabel>+47.13</AxisLabel></Axis>
        </Panel>
        <Panel $grow={130}>
          <Plot $last>
            <PanelHead>
              <Legend>
                <LegendItem $c="gray" $gap={4}>MACD(12,26,9)</LegendItem>
                <LegendItem $c="red">MACD: +0.035<Arrow /></LegendItem>
                <LegendItem $c="white">DIFF: +0.012<Arrow up /></LegendItem>
                <LegendItem $c="yellow">DEA: -0.005<Arrow up /></LegendItem>
              </Legend>
              <HelpButton>指标说明</HelpButton>
            </PanelHead>
            <MacdChart />
          </Plot>
          <Axis $top={9} $gap={21}>
            <AxisLabel>+0.190</AxisLabel><AxisLabel>+0.047</AxisLabel><AxisLabel $c="green">-0.100</AxisLabel>
          </Axis>
        </Panel>
        <Dates>{dates.map((d) => <span key={d}>{d}</span>)}</Dates>
      </Main>
    </Body>

    <IndexBar>
      {indexes.map((x) => (
        <IndexCell key={x.name} $cols={x.cols}>
          <IndexName $c={x.nameColor}>{x.name}<Num $c={x.c}>{x.values[0]}</Num></IndexName>
          <Num $c={x.c}>{x.values[1]}</Num>
          <Num $c={x.c}>{x.values[2]}</Num>
          {x.money ? <Turnover><Num $c="cyan">{x.money}</Num>亿</Turnover> : <FaWrench size={12} color="#777" />}
        </IndexCell>
      ))}
    </IndexBar>

    <NewsBar>
      {links.map((l) => <NewsLink key={l} href={`#${l}`}>{l}</NewsLink>)}
      <News href="#news1" $grow={399}><Time>14</Time>苏州网约车细则公布：明确平台应向社会公开投诉渠道</News>
      <News href="#news2" $grow={419}><Time>15:56</Time>福建加强房地产市场土地调控 土地溢价率过高可终止拍卖</News>
      <Search>
        <input placeholder="代码/名称/简拼/功能" aria-label="代码/名称/简拼/功能" />
        <FaSearch size={10} />
      </Search>
      <Clock>16:51:25</Clock>
    </NewsBar>
    <TaskEdge />
    <Badge>82</Badge>
  </Page>
);

export default App;
